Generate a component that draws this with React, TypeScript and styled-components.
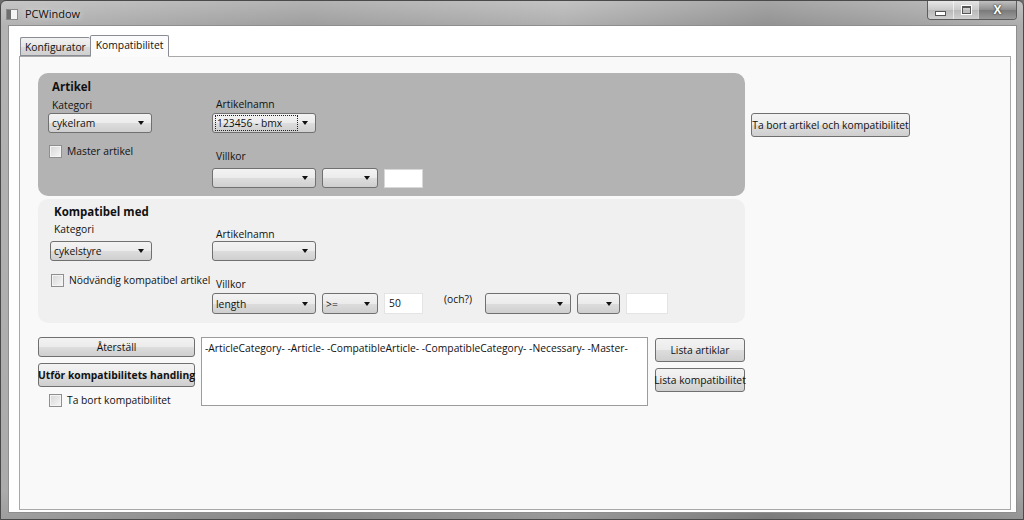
import styled, { createGlobalStyle, css } from "styled-components";

const GlobalStyle = createGlobalStyle`
  html, body {
    margin: 0;
    padding: 0;
    background: #6e6e6e;
  }
  body {
    font-family: "Open Sans", "Noto Sans", sans-serif;
    font-size: 10.3px;
    color: #111;
  }
`;

const Window = styled.div`
  width: 1024px;
  height: 520px;
  box-sizing: border-box;
  display: flex;
  flex-direction: column;
  border: 1px solid #4a4a4a;
  border-radius: 6px 6px 0 0;
  background:
    linear-gradient(90deg, rgba(255,255,255,0.15), rgba(0,0,0,0.05) 30%, rgba(255,255,255,0.1) 55%, rgba(0,0,0,0.12) 75%, rgba(255,255,255,0.08)),
    linear-gradient(#bcbcbc, #a6a6a6 25px, #9d9d9d 490px, #8c8c8c);
  overflow: hidden;
`;

const TitleBar = styled.div`
  height: 24px;
  display: flex;
  align-items: flex-start;
  padding-left: 5px;
`;

const AppIcon = styled.div`
  width: 10px;
  height: 9px;
  margin-top: 8px;
  border: 1px solid #8a8a8a;
  background: linear-gradient(90deg, #6e6e6e 0 4px, #f4f4f4 4px);
`;

const Title = styled.div`
  margin: 5px 0 0 7px;
  font-size: 11px;
  color: #111;
  text-shadow: 0 0 6px rgba(255, 255, 255, 0.9);
`;

const Grow = styled.div`
  flex: 1;
`;

const CaptionGroup = styled.div`
  display: flex;
  margin-right: 6px;
  border: 1px solid #5c5c5c;
  border-top: none;
  border-radius: 0 0 4px 4px;
  overflow: hidden;
  height: 18px;
`;

const CaptionButton = styled.div<{ $w: number; $close?: boolean }>`
  width: ${(p) => p.$w}px;
  display: flex;
  align-items: center;
  justify-content: center;
  border-left: 1px solid rgba(255, 255, 255, 0.6);
  background: ${(p) =>
    p.$close
      ? "linear-gradient(#c0c0c0, #8d8d8d 50%, #7a7a7a 51%, #9a9a9a)"
      : "linear-gradient(#e6e6e6, #c9c9c9 50%, #b8b8b8 51%, #cfcfcf)"};
  &:first-child {
    border-left: none;
  }
`;

const MinGlyph = styled.div`
  width: 9px;
  height: 3px;
  margin-top: 6px;
  background: #fff;
  border: 1px solid #555;
`;

const MaxGlyph = styled.div`
  width: 7px;
  height: 5px;
  border: 1px solid #555;
  border-top-width: 2px;
  box-shadow: 0 0 0 1px #fff;
`;

const CloseGlyph = styled.div`
  color: #fff;
  font-weight: bold;
  font-size: 12px;
  line-height: 1;
  text-shadow: 0 0 2px #333, 0 0 1px #333;
`;

const Client = styled.div`
  flex: 1;
  margin: 0 6px 6px 7px;
  background: #ffffff;
  border: 1px solid #8e8e8e;
  padding: 9px 5px 2px 10px;
  display: flex;
  flex-direction: column;
`;

const TabStrip = styled.div`
  display: flex;
  align-items: flex-end;
  height: 21px;
  padding-left: 1px;
  position: relative;
  z-index: 1;
`;

const Tab = styled.div<{ $active?: boolean }>`
  box-sizing: border-box;
  border: 1px solid #898c95;
  border-radius: 2px 2px 0 0;
  display: flex;
  align-items: center;
  ${(p) =>
    p.$active
      ? css`
          height: 22px;
          margin-bottom: -1px;
          background: #fbfbfb;
          border-bottom-color: #fbfbfb;
          padding: 0 5px 2px;
        `
      : css`
          height: 19px;
          padding: 0 4px;
          background: linear-gradient(#f2f2f2, #e6e6e6 50%, #d9d9d9 51%, #d0d0d0);
          border-right: none;
        `}
`;

const TabPanel = styled.div`
  flex: 1;
  border: 1px solid #a9a9a9;
  background: #f9f9f9;
  padding: 16px 0 0 18px;
  display: flex;
  align-items: flex-start;
  gap: 6px;
`;

const Form = styled.div`
  width: 707px;
  display: flex;
  flex-direction: column;
`;

const Group = styled.div<{ $dark?: boolean; $inset: number; $top: number; $bottom: number }>`
  border-radius: 10px;
  background: ${(p) => (p.$dark ? "#b3b3b3" : "#f0f0f0")};
  padding: ${(p) => `${p.$top}px 0 ${p.$bottom}px ${p.$inset}px`};
  display: flex;
  & + & {
    margin-top: 3px;
  }
`;

const Column = styled.div<{ $w?: number }>`
  display: flex;
  flex-direction: column;
  align-items: flex-start;
  ${(p) => (p.$w ? `width: ${p.$w}px;` : "flex: 1;")}
`;

const GroupTitle = styled.div`
  font-size: 11.5px;
  font-weight: bold;
  line-height: 16px;
  padding-left: 4px;
`;

const Label = styled.div<{ $mt: number }>`
  line-height: 14px;
  padding-left: 4px;
  margin-top: ${(p) => p.$mt}px;
`;

const ComboBox = styled.div<{ $w: number; $h?: number; $mt?: number }>`
  box-sizing: border-box;
  width: ${(p) => p.$w}px;
  height: ${(p) => p.$h ?? 20}px;
  margin-top: ${(p) => p.$mt ?? 0}px;
  border: 1px solid #707070;
  border-radius: 3px;
  background: linear-gradient(#f3f3f3, #ebebeb 50%, #dddddd 51%, #cfcfcf);
  display: flex;
  align-items: center;
  padding-left: 3px;
  flex-shrink: 0;
`;

const ComboText = styled.div<{ $focus?: boolean }>`
  flex: 1;
  line-height: 14px;
  white-space: nowrap;
  ${(p) =>
    p.$focus &&
    css`
      outline: 1px dotted #222;
      margin-right: 1px;
      padding-left: 1px;
    `}
`;

const Arrow = styled.div`
  width: 0;
  height: 0;
  margin: 0 7px 0 4px;
  border-left: 3.5px solid transparent;
  border-right: 3.5px solid transparent;
  border-top: 4px solid #111;
`;

const Field = styled.div<{ $w: number; $h: number; $edge: string }>`
  box-sizing: border-box;
  width: ${(p) => p.$w}px;
  height: ${(p) => p.$h}px;
  background: #fff;
  border: 1px solid ${(p) => p.$edge};
  padding: 2px 4px;
  line-height: 14px;
  flex-shrink: 0;
`;

const Row = styled.div<{ $mt: number; $gap?: number }>`
  display: flex;
  align-items: center;
  gap: ${(p) => p.$gap ?? 6}px;
  margin-top: ${(p) => p.$mt}px;
`;

const Check = styled.label<{ $mt: number; $ml: number }>`
  display: flex;
  align-items: center;
  gap: 5px;
  line-height: 14px;
  white-space: nowrap;
  margin: ${(p) => `${p.$mt}px 0 0 ${p.$ml}px`};
`;

const CheckBox = styled.span`
  width: 13px;
  height: 13px;
  box-sizing: border-box;
  border: 1px solid #8f8f8f;
  background: linear-gradient(135deg, #d6d6d6, #f7f7f7);
  box-shadow: inset 0 0 0 1px #f4f4f4;
`;

const OrLabel = styled.div`
  align-self: flex-start;
  margin-left: 15px;
  width: 35px;
  line-height: 12px;
`;

const Actions = styled.div`
  display: flex;
  align-items: flex-start;
  margin-top: 14px;
`;

const Button = styled.div<{ $w: number; $h: number; $bold?: boolean; $mt?: number }>`
  box-sizing: border-box;
  width: ${(p) => p.$w}px;
  height: ${(p) => p.$h}px;
  margin-top: ${(p) => p.$mt ?? 0}px;
  border: 1px solid #707070;
  border-radius: 3px;
  background: linear-gradient(#f3f3f3, #ebebeb 50%, #dddddd 51%, #cfcfcf);
  display: flex;
  align-items: center;
  justify-content: center;
  white-space: nowrap;
  font-weight: ${(p) => (p.$bold ? "bold" : "normal")};
  flex-shrink: 0;
`;

const ButtonStack = styled.div<{ $gap: number }>`
  display: flex;
  flex-direction: column;
  align-items: flex-start;
  gap: ${(p) => p.$gap}px;
`;

const Output = styled.div`
  box-sizing: border-box;
  width: 447px;
  height: 69px;
  margin: 0 7px 0 6px;
  background: #fff;
  border: 1px solid #9c9c9c;
  padding: 3px 3px;
  line-height: 14px;
  white-space: nowrap;
`;

const SideButton = styled(Button)`
  margin-top: 40px;
`;

export default function App() {
  return (
    <>
      <GlobalStyle />
      <Window>
        <TitleBar>
          <AppIcon />
          <Title>PCWindow</Title>
          <Grow />
          <CaptionGroup>
            <CaptionButton $w={25}>
              <MinGlyph />
            </CaptionButton>
            <CaptionButton $w={24}>
              <MaxGlyph />
            </CaptionButton>
            <CaptionButton $w={37} $close>
              <CloseGlyph>X</CloseGlyph>
            </CaptionButton>
          </CaptionGroup>
        </TitleBar>
        <Client>
          <TabStrip>
            <Tab>Konfigurator</Tab>
            <Tab $active>Kompatibilitet</Tab>
          </TabStrip>
          <TabPanel>
            <Form>
              <Group $dark $inset={10} $top={6} $bottom={8}>
                <Column $w={164}>
                  <GroupTitle>Artikel</GroupTitle>
                  <Label $mt={3}>Kategori</Label>
                  <ComboBox $w={104} $mt={1}>
                    <ComboText>cykelram</ComboText>
                    <Arrow />
                  </ComboBox>
                  <Check $mt={11} $ml={1}>
                    <CheckBox />
                    Master artikel
                  </Check>
                </Column>
                <Column>
                  <Label $mt={18}>Artikelnamn</Label>
                  <ComboBox $w={104} $mt={2}>
                    <ComboText $focus>123456 - bmx</ComboText>
                    <Arrow />
                  </ComboBox>
                  <Label $mt={16}>Villkor</Label>
                  <Row $mt={5}>
                    <ComboBox $w={104}>
                      <ComboText />
                      <Arrow />
                    </ComboBox>
                    <ComboBox $w={56}>
                      <ComboText />
                      <Arrow />
                    </ComboBox>
                    <Field $w={39} $h={19} $edge="#d8d8d8" />
                  </Row>
                </Column>
              </Group>

              <Group $inset={12} $top={5} $bottom={9}>
                <Column $w={162}>
                  <GroupTitle>Kompatibel med</GroupTitle>
                  <Label $mt={2}>Kategori</Label>
                  <ComboBox $w={102} $mt={5}>
                    <ComboText>cykelstyre</ComboText>
                    <Arrow />
                  </ComboBox>
                  <Check $mt={12} $ml={1}>
                    <CheckBox />
                    Nödvändig kompatibel artikel
                  </Check>
                </Column>
                <Column>
                  <Label $mt={23}>Artikelnamn</Label>
                  <ComboBox $w={104}>
                    <ComboText />
                    <Arrow />
                  </ComboBox>
                  <Label $mt={16}>Villkor</Label>
                  <Row $mt={2}>
                    <ComboBox $w={104} $h={21}>
                      <ComboText>length</ComboText>
                      <Arrow />
                    </ComboBox>
                    <ComboBox $w={56} $h={21}>
                      <ComboText>&gt;=</ComboText>
                      <Arrow />
                    </ComboBox>
                    <Field $w={39} $h={21} $edge="#e4e4e4">
                      50
                    </Field>
                    <OrLabel>(och?)</OrLabel>
                    <ComboBox $w={86} $h={21}>
                      <ComboText />
                      <Arrow />
                    </ComboBox>
                    <ComboBox $w={43} $h={21}>
                      <ComboText />
                      <Arrow />
                    </ComboBox>
                    <Field $w={42} $h={21} $edge="#e4e4e4" />
                  </Row>
                </Column>
              </Group>

              <Actions>
                <ButtonStack $gap={6}>
                  <Button $w={157} $h={20}>
                    Återställ
                  </Button>
                  <Button $w={157} $h={24} $bold>
                    Utför kompatibilitets handling
                  </Button>
                  <Check $mt={0} $ml={11}>
                    <CheckBox />
                    Ta bort kompatibilitet
                  </Check>
                </ButtonStack>
                <Output>
                  -ArticleCategory- -Article- -CompatibleArticle- -CompatibleCategory- -Necessary- -Master-
                </Output>
                <ButtonStack $gap={6}>
                  <Button $w={90} $h={24} $mt={1}>
                    Lista artiklar
                  </Button>
                  <Button $w={90} $h={24}>
                    Lista kompatibilitet
                  </Button>
                </ButtonStack>
              </Actions>
            </Form>
            <SideButton $w={159} $h={24}>
              Ta bort artikel och kompatibilitet
            </SideButton>
          </TabPanel>
        </Client>
      </Window>
    </>
  );
}
